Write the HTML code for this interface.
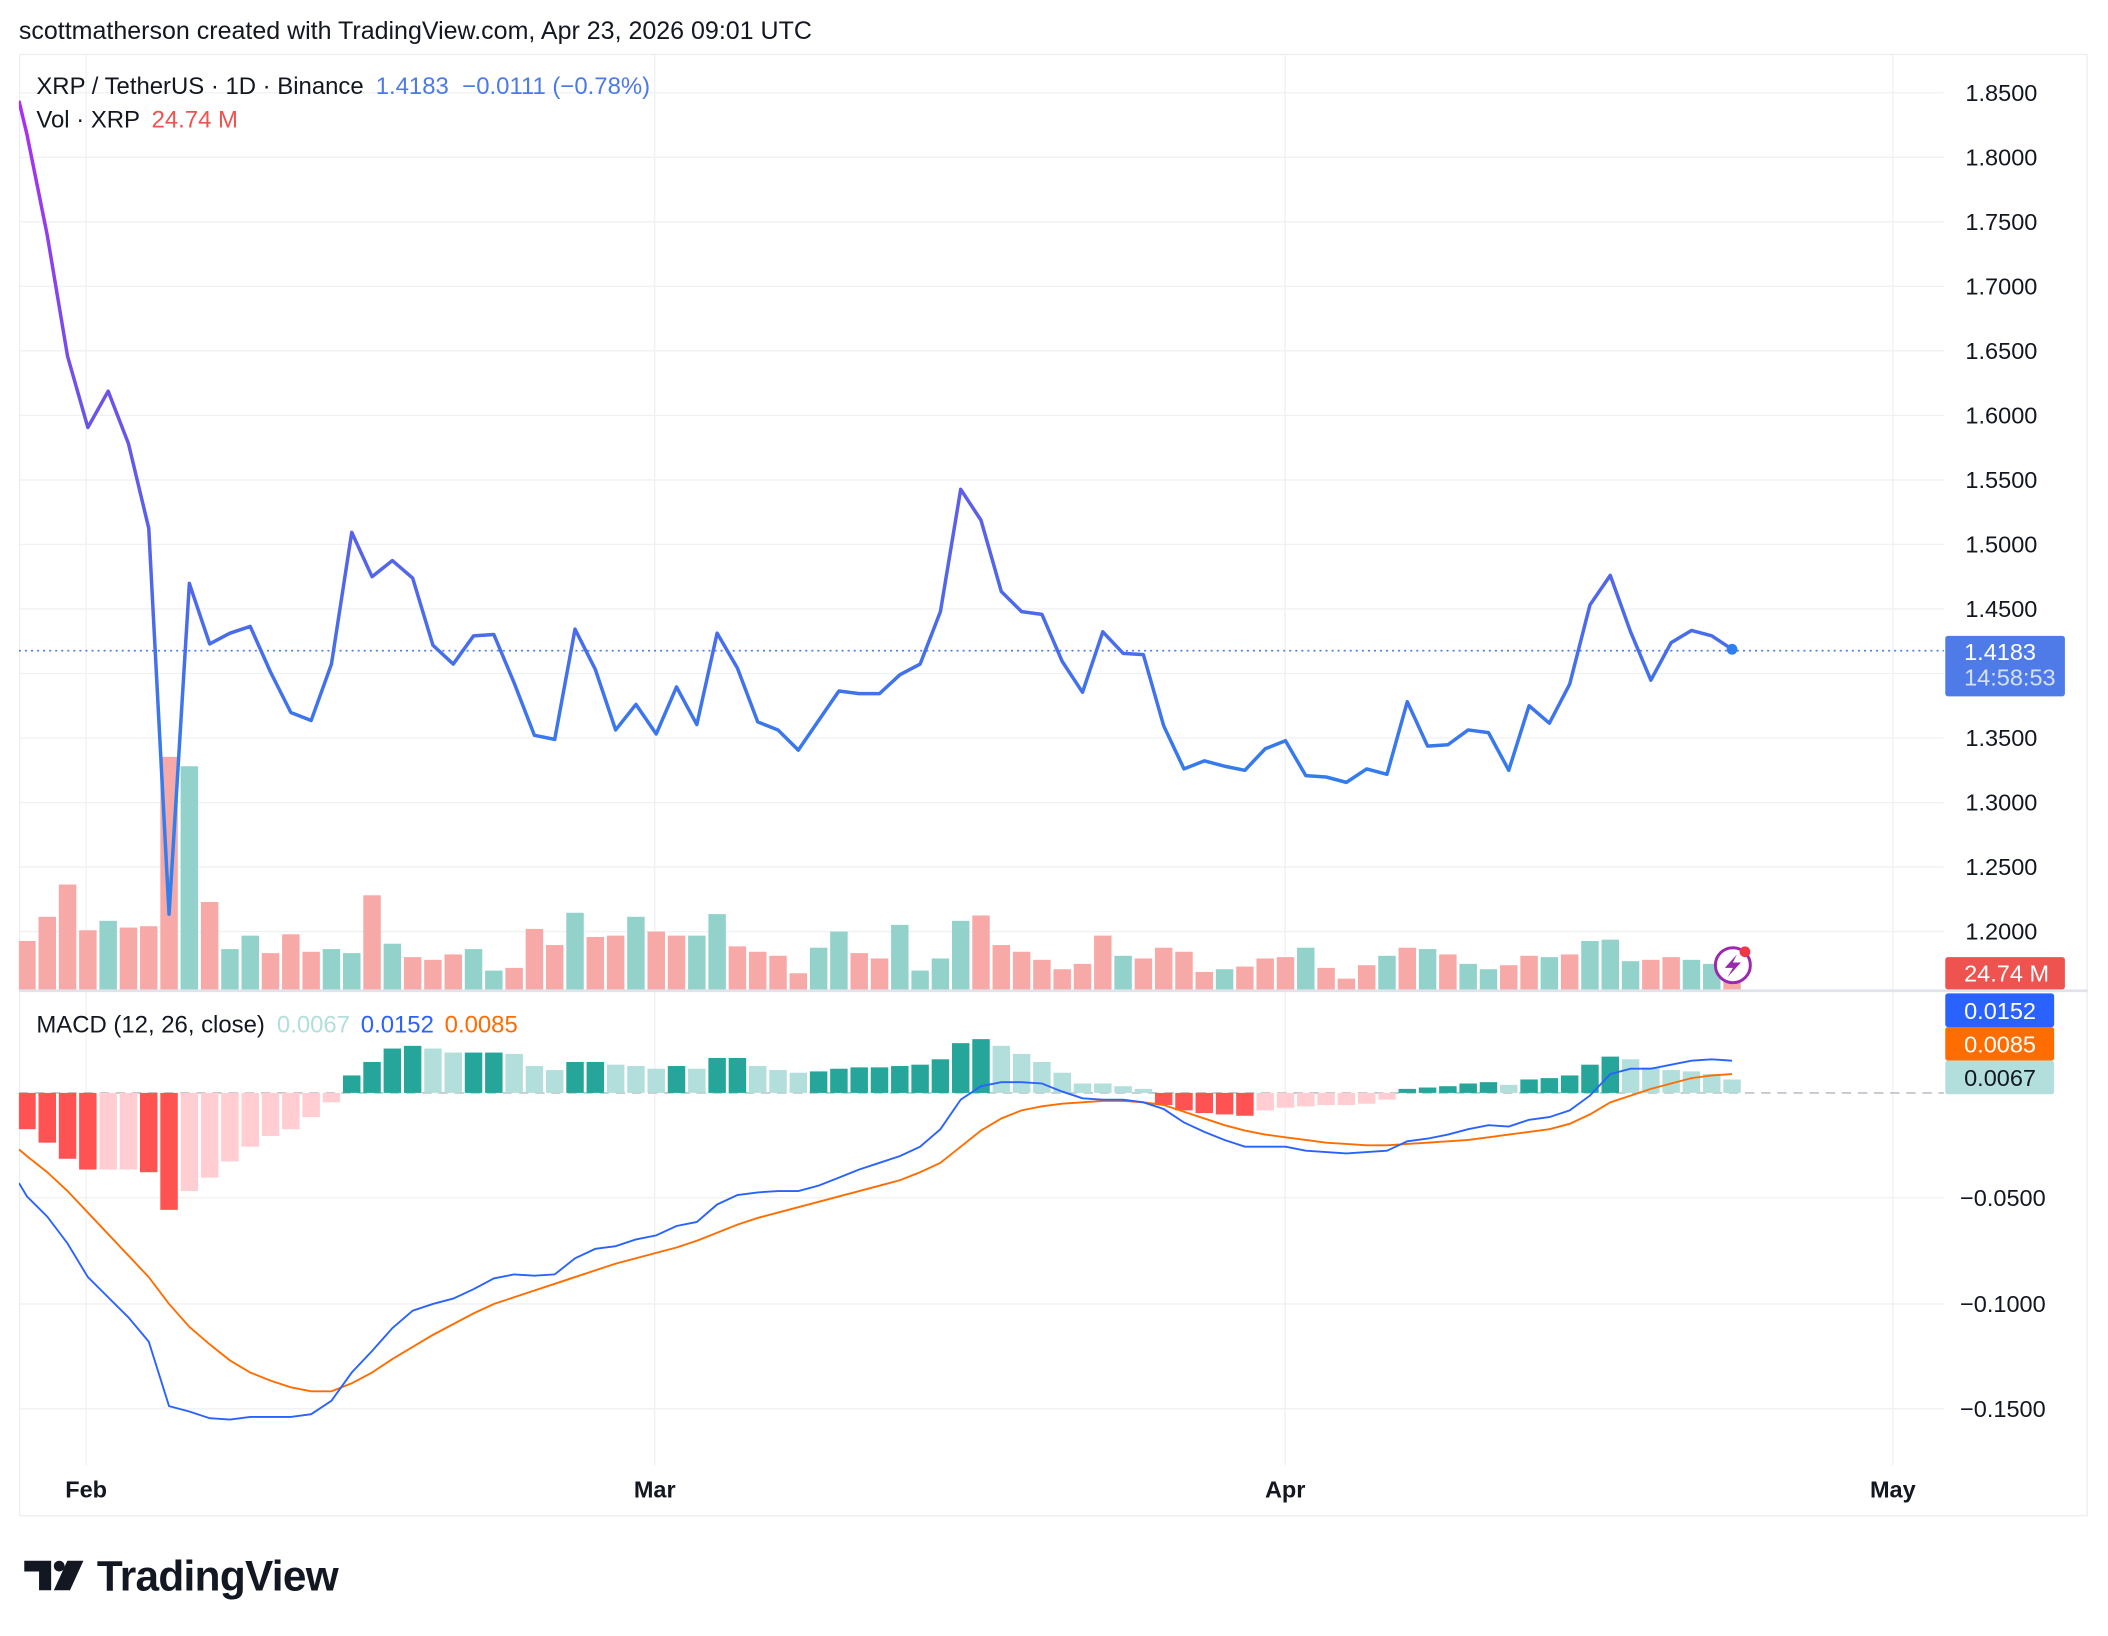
<!DOCTYPE html>
<html><head><meta charset="utf-8"><style>
html,body{margin:0;padding:0;background:#fff;}
svg{display:block;}
text{font-family:"Liberation Sans",sans-serif;}
</style></head><body>
<svg id="s" width="2108" height="1636" viewBox="0 0 1568 1217" xmlns="http://www.w3.org/2000/svg">
<defs>
<linearGradient id="pg" gradientUnits="userSpaceOnUse" x1="0" y1="70" x2="0" y2="600">
<stop offset="0" stop-color="#b02cf0"/><stop offset="0.45" stop-color="#6a55e8"/><stop offset="1" stop-color="#2f7fee"/>
</linearGradient>
<clipPath id="cp"><rect x="14" y="40" width="1432" height="1050"/></clipPath>
</defs>
<rect width="1568" height="1217" fill="#fff"/>
<text x="14" y="29" font-size="18.6" fill="#131722">scottmatherson created with TradingView.com, Apr 23, 2026 09:01 UTC</text>
<g id="grid" stroke="#f0f1f3" stroke-width="1"></g>
<rect x="14.5" y="40.5" width="1538" height="1087" fill="none" stroke="#eceef1"/>
<line x1="14" y1="737" x2="1553" y2="737" stroke="#e0e3eb" stroke-width="2"/>
<g id="plot" clip-path="url(#cp)"></g>
<g id="labels" font-size="17.5" fill="#131722"></g>
<text x="27" y="70" font-size="17.8" fill="#131722">XRP / TetherUS · 1D · Binance <tspan fill="#4c7ae8" dx="4">1.4183</tspan><tspan fill="#4c7ae8" dx="10">−0.0111 (−0.78%)</tspan></text>
<text x="27" y="95" font-size="17.8" fill="#131722">Vol · XRP <tspan fill="#ef5350" dx="4">24.74 M</tspan></text>
<text x="27" y="768" font-size="17.8" fill="#131722">MACD (12, 26, close) <tspan fill="#b2dfdb" dx="4">0.0067</tspan><tspan fill="#2962ff" dx="8">0.0152</tspan><tspan fill="#ff6d00" dx="8">0.0085</tspan></text>
<rect x="1447" y="473" width="89" height="45" rx="2" fill="#4f7be9"/>
<text x="1461" y="491" font-size="17.5" fill="#fff">1.4183</text>
<text x="1461" y="510" font-size="17.5" fill="#d6e0fa">14:58:53</text>
<rect x="1447" y="712" width="89" height="24" rx="2" fill="#ef5350"/>
<text x="1461" y="730" font-size="17.5" fill="#fff">24.74 M</text>
<rect x="1447" y="739" width="81" height="25" rx="2" fill="#2962ff"/>
<text x="1461" y="758" font-size="17.5" fill="#fff">0.0152</text>
<rect x="1447" y="764" width="81" height="25" rx="2" fill="#ff6d00"/>
<text x="1461" y="783" font-size="17.5" fill="#fff">0.0085</text>
<rect x="1447" y="789" width="81" height="25" rx="2" fill="#b2dfdb"/>
<text x="1461" y="808" font-size="17.5" fill="#131722">0.0067</text>
<g font-size="17.5" font-weight="bold" fill="#131722" text-anchor="middle">
<text x="64" y="1114">Feb</text><text x="487" y="1114">Mar</text><text x="956" y="1114">Apr</text><text x="1408" y="1114">May</text>
</g>
<circle cx="1289" cy="718" r="13" fill="#fff" stroke="#9c27b0" stroke-width="2.2"/>
<path d="M1292 710 L1283 720 L1289 720 L1285 727 L1295 716 L1289 716 Z" fill="#9c27b0"/>
<circle cx="1298" cy="708" r="4" fill="#f23645"/>
<path d="M18 1161 H38 V1183 H29 V1169 H18 Z" fill="#131722"/>
<circle cx="44" cy="1165" r="4" fill="#131722"/>
<path d="M50 1161 H62 L52 1183 H40 Z" fill="#131722"/>
<text x="72" y="1183" font-size="31.5" font-weight="bold" fill="#131722" letter-spacing="-0.5">TradingView</text>
</svg>
<script>
const NS="http://www.w3.org/2000/svg";
function el(p,t,a){const e=document.createElementNS(NS,t);for(const k in a)e.setAttribute(k,a[k]);p.appendChild(e);return e;}
const grid=document.getElementById('grid'),plot=document.getElementById('plot'),labels=document.getElementById('labels');
[64,487,956,1408].forEach(x=>el(grid,'line',{x1:x,y1:40,x2:x,y2:1090}));
for(let i=0;i<14;i++){const y=69+48*i;if(y>700)break;el(grid,'line',{x1:14,y1:y,x2:1446,y2:y});
 const t=el(labels,'text',{x:1462,y:y+6});t.textContent=(1.85-0.05*i).toFixed(4);}
[[891,'−0.0500'],[970,'−0.1000'],[1048,'−0.1500']].forEach(([y,s])=>{el(grid,'line',{x1:14,y1:y,x2:1446,y2:y});const t=el(labels,'text',{x:1458,y:y+6});t.textContent=s;});
const X=i=>20+15.1*i;
const vt=[700,682,658,692,685,690,689,563,570,671,706,696,709,695,708,706,709,666,702,712,714,710,706,722,720,691,703,679,697,696,682,693,696,696,680,704,708,711,724,705,693,709,713,688,722,713,685,681,703,708,714,721,717,696,711,713,705,708,723,721,719,713,712,705,720,728,718,711,705,706,710,717,721,718,711,712,710,700,699,715,714,712,714,717,718];
const cols=['r','r','r','r','g','r','r','r','g','r','g','g','r','r','r','g','g','r','g','r','r','r','g','g','r','r','r','g','r','r','g','r','r','g','g','r','r','r','r','g','g','r','r','g','g','g','g','r','r','r','r','r','r','r','g','r','r','r','r','g','r','r','r','g','r','r','r','g','r','g','r','g','g','r','r','g','r','g','g','g','r','r','g','g','r','r'];
vt.forEach((t,i)=>el(plot,'rect',{x:X(i)-6.5,y:t,width:13,height:736-t,fill:cols[i]==='g'?'#92d2cb':'#f7a9a7'}));
el(plot,'line',{x1:14,y1:484,x2:1446,y2:484,stroke:'#4c7ae8','stroke-width':1.2,'stroke-dasharray':'1.5 3'});
const py=[100,175,265,318,291,330,393,680,434,479,471,466,500,530,536,494,396,429,417,430,480,494,473,472,508,547,550,468,498,543,524,546,511,539,471,497,537,543,558,536,514,516,516,502,494,455,364,387,440,455,457,492,515,470,486,487,540,572,566,570,573,557,551,577,578,582,572,576,522,555,554,543,545,573,525,538,509,450,428,470,506,478,469,473,483];
let d='M14 75 '+py.map((y,i)=>'L'+X(i).toFixed(1)+' '+y).join(' ');
el(plot,'path',{d:d,fill:'none',stroke:'url(#pg)','stroke-width':2.6,'stroke-linejoin':'round'});
el(plot,'circle',{cx:X(84),cy:483,r:4,fill:'#2f7fee'});
el(plot,'line',{x1:14,y1:813,x2:1446,y2:813,stroke:'#b2b5be','stroke-width':1,'stroke-dasharray':'7 5'});
const h=[840,850,862,870,870,870,872,900,886,876,864,853,845,840,831,820,800,790,780,778,780,783,783,783,784,793,796,790,790,792,793,795,793,795,787,787,793,796,798,797,795,794,794,793,792,788,776,773,778,784,790,798,806,806,808,810,822,826,828,829,830,826,824,823,822,822,821,818,810,809,808,806,805,807,803,802,800,792,786,788,794,796,797,799,803];
const ht="RRRRrrRRrrrrrrrrGGGGggGGgggGGgggGgGGgggGGGGGGGGGggggggggRRRRRrrrrrrrGGGGGgGGGGGgggggg";
const hc={R:'#ff5252',r:'#ffcdd2',G:'#26a69a',g:'#b2dfdb'};
h.forEach((v,i)=>{const c=hc[ht[i]||'g'];
 const y=Math.min(v,813),hh=Math.max(Math.abs(v-813),1);
 el(plot,'rect',{x:X(i)-6.5,y:y,width:13,height:hh,fill:c});});
const sig=[860,872,886,902,918,934,950,970,987,1000,1012,1021,1027,1032,1035,1035,1029,1021,1011,1002,993,985,977,970,965,960,955,950,945,940,936,932,928,923,917,911,906,902,898,894,890,886,882,878,872,865,853,841,832,826,823,821,820,819,819,820,822,827,832,837,841,844,846,848,850,851,852,852,851,850,849,848,846,844,842,840,836,829,820,815,810,806,802,800,799];
const mac=[890,905,925,950,965,980,998,1046,1050,1055,1056,1054,1054,1054,1052,1042,1021,1005,988,975,970,966,959,951,948,949,948,936,929,927,922,919,912,909,896,889,887,886,886,882,876,870,865,860,853,840,818,808,805,805,806,812,817,818,818,820,825,835,842,848,853,853,853,856,857,858,857,856,849,847,844,840,837,838,833,831,826,815,799,795,795,792,789,788,789];
el(plot,'path',{d:'M14 855 '+sig.map((y,i)=>'L'+X(i).toFixed(1)+' '+y).join(' '),fill:'none',stroke:'#ff6d00','stroke-width':1.4});
el(plot,'path',{d:'M14 880 '+mac.map((y,i)=>'L'+X(i).toFixed(1)+' '+y).join(' '),fill:'none',stroke:'#2962ff','stroke-width':1.4});
</script>
</body></html>
